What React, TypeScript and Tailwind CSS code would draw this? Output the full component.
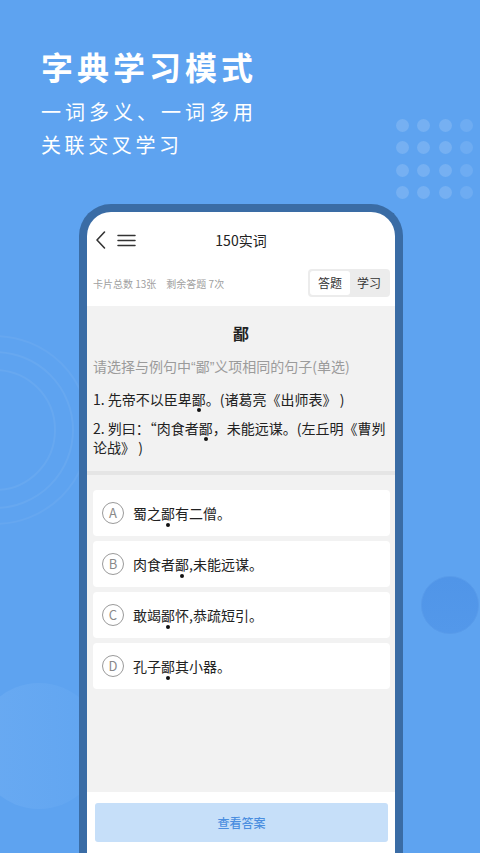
import React from "react";

const FONT = { fontFamily: '"Noto Sans CJK SC", "Noto Sans", sans-serif' };

function Dotted({ children }: { children: React.ReactNode }) {
  return (
    <span className="relative inline-block">
      {children}
      <span className="absolute left-1/2 -translate-x-1/2 bottom-[-3px] w-[4px] h-[4px] rounded-full bg-[#111]" />
    </span>
  );
}

function Q({ children }: { children: React.ReactNode }) {
  return <span style={{ fontFamily: '"Liberation Sans", sans-serif' }}>{children}</span>;
}

const options: { key: string; pre: string; post: string }[] = [
  { key: "A", pre: "蜀之", post: "有二僧。" },
  { key: "B", pre: "肉食者", post: ",未能远谋。" },
  { key: "C", pre: "敢竭", post: "怀,恭疏短引。" },
  { key: "D", pre: "孔子", post: "其小器。" },
];

export default function App() {
  return (
    <div
      className="relative w-[480px] h-[853px] overflow-hidden bg-[#5ea3f0] flex flex-col"
      style={FONT}
    >
      {/* decorations */}
      <svg
        className="absolute left-0 top-[300px]"
        width="120"
        height="260"
        viewBox="0 0 120 260"
      >
        <circle cx="-5" cy="130" r="60" fill="none" stroke="#ffffff" strokeOpacity="0.06" strokeWidth="2" />
        <circle cx="-5" cy="130" r="78" fill="none" stroke="#ffffff" strokeOpacity="0.06" strokeWidth="2" />
        <circle cx="-5" cy="130" r="94" fill="none" stroke="#ffffff" strokeOpacity="0.05" strokeWidth="2" />
      </svg>
      <div className="absolute left-[-24px] top-[683px] w-[126px] h-[126px] rounded-full bg-gradient-to-r from-[#6eadf3] to-[#62a6f1] opacity-70" />
      <div className="absolute left-[421px] top-[576px] w-[58px] h-[58px] rounded-full bg-gradient-to-b from-[#5095e8] to-[#5398ea] border border-[#589bea]" />
      <div className="absolute left-[396px] top-[119px] grid grid-cols-4 gap-x-[8.3px] gap-y-[9.3px]">
        {Array.from({ length: 16 }).map((_, i) => (
          <div
            key={i}
            className={
              i % 4 === 3
                ? "w-[13px] h-[13px] rounded-full bg-white/10"
                : "w-[13px] h-[13px] rounded-full bg-white/15"
            }
          />
        ))}
      </div>

      {/* heading */}
      <div className="relative pl-[41px] pt-[47px] text-white">
        <div className="text-[32px] leading-[38px] font-bold tracking-[4px]">字典学习模式</div>
        <div className="mt-[15px] text-[20px] leading-[24px] tracking-[4px]">一词多义、一词多用</div>
        <div className="mt-[9px] text-[20px] leading-[24px] tracking-[3.6px]">关联交叉学习</div>
      </div>

      {/* phone */}
      <div className="relative mt-[47px] ml-[79px] w-[324px] flex-1 border-[8px] border-b-0 border-[#3a6ca5] rounded-t-[32px] bg-white overflow-hidden flex flex-col">
        {/* header */}
        <div className="relative h-[56px] flex items-center justify-center shrink-0">
          <svg className="absolute left-0 top-0" width="60" height="56" viewBox="87 212 60 56">
            <path d="M104.5 232 L97 240 L104.5 248" fill="none" stroke="#333" strokeWidth="1.6" strokeLinecap="round" strokeLinejoin="round" />
            <path d="M118 235.5 H135 M118 240.5 H135 M118 245.5 H135" fill="none" stroke="#333" strokeWidth="1.5" strokeLinecap="round" />
          </svg>
          <span className="text-[14px] text-[#222]">150实词</span>
        </div>
        {/* stats */}
        <div className="h-[30px] mb-[8px] pl-[6px] pr-[5px] flex items-center justify-between shrink-0">
          <div className="text-[10px] text-[#a0a0a0] flex gap-[10px]">
            <span>卡片总数 13张</span>
            <span>剩余答题 7次</span>
          </div>
          <div className="h-[28px] w-[82px] rounded-[4px] bg-[#ececec] p-[2px] flex">
            <div className="w-[40px] bg-white rounded-[3px] flex items-center justify-center text-[12px] text-[#333]">答题</div>
            <div className="flex-1 flex items-center justify-center text-[12px] text-[#333]">学习</div>
          </div>
        </div>
        {/* question */}
        <div className="bg-[#f2f2f2] h-[165px] px-[6px] pt-[16px] shrink-0">
          <div className="text-center text-[16px] leading-[22px] font-bold text-[#222]">鄙</div>
          <div className="mt-[12px] text-[14px] leading-[20px] text-[#9b9b9b]">
            请选择与例句中<Q>“</Q>鄙<Q>”</Q>义项相同的句子(单选)
          </div>
          <div className="mt-[12px] text-[14px] leading-[20px] text-[#222]">
            1. 先帝不以臣卑<Dotted>鄙</Dotted>。(诸葛亮《出师表》 )
          </div>
          <div className="mt-[10px] text-[14px] leading-[19px] text-[#222]">
            <span className="whitespace-nowrap">
              2. 刿曰：“肉食者<Dotted>鄙</Dotted>，未能远谋。(左丘明《曹刿
            </span>
            <br />
            论战》 )
          </div>
        </div>
        <div className="h-[4px] bg-[#e5e5e5] shrink-0" />
        {/* options */}
        <div className="bg-[#f2f2f2] h-[317px] pt-[15px] pl-[6px] pr-[5px] flex flex-col gap-[5px] shrink-0">
          {options.map((o) => (
            <div key={o.key} className="h-[46px] bg-white rounded-[4px] flex items-center pl-[9px]">
              <div className="w-[22px] h-[22px] rounded-full border border-[#9a9a9a] flex items-center justify-center text-[13px] text-[#8a8a8a]">
                {o.key}
              </div>
              <div className="ml-[9px] text-[14px] text-[#222]">
                {o.pre}
                <Dotted>鄙</Dotted>
                {o.post}
              </div>
            </div>
          ))}
        </div>
        {/* footer */}
        <div className="flex-1 pt-[11px] pl-[8px] pr-[7px]">
          <div className="h-[39px] rounded-[3px] bg-[#c6dff9] flex items-center justify-center text-[12px] text-[#4a8ee0] font-medium">
            查看答案
          </div>
        </div>
      </div>
    </div>
  );
}
